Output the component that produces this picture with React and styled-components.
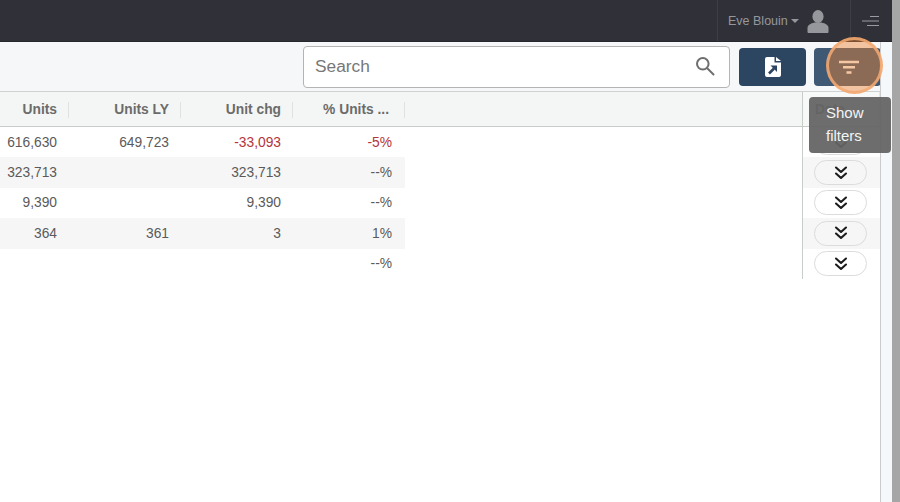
import React from "react";
import styled, { createGlobalStyle } from "styled-components";

const Global = createGlobalStyle`
  html, body { margin: 0; padding: 0; height: 100%; overflow: hidden; }
  body { font-family: "Liberation Sans", Arial, sans-serif; background: #fff; }
`;

const Page = styled.div`
  display: flex;
  width: 900px;
  height: 502px;
  position: relative;
  overflow: hidden;
`;

const Main = styled.div`
  flex: 1;
  display: flex;
  flex-direction: column;
  min-width: 0;
`;

const TopBar = styled.div`
  height: 42px;
  flex: none;
  box-sizing: border-box;
  background: #303138;
  border-bottom: 1px solid #26272c;
  display: flex;
  justify-content: flex-end;
  align-items: stretch;
`;

const UserBox = styled.div`
  display: flex;
  align-items: center;
  width: 133px;
  box-sizing: border-box;
  padding-left: 10px;
  border-left: 1px solid #3c3d45;
  color: #96979c;
  font-size: 12.5px;
`;

const Caret = styled.span`
  width: 0;
  height: 0;
  margin: 1px 0 0 3px;
  border-left: 4px solid transparent;
  border-right: 4px solid transparent;
  border-top: 4px solid #96979c;
`;

const Avatar = styled.svg`
  margin-left: 7px;
`;

const MenuBox = styled.div`
  width: 42px;
  box-sizing: border-box;
  border-left: 1px solid #3c3d45;
  display: flex;
  align-items: center;
  justify-content: flex-end;
  padding-right: 13px;
`;

const Body = styled.div`
  flex: 1;
  display: flex;
  min-height: 0;
`;

const Content = styled.div`
  width: 880px;
  flex: none;
  display: flex;
  flex-direction: column;
`;

const Gutter = styled.div`
  flex: 1;
  background: #f5f8fb;
  border-left: 1px solid #c9cbcd;
`;

const Scrollbar = styled.div`
  width: 8px;
  flex: none;
  background: #a6a6a6;
`;

const Toolbar = styled.div`
  height: 50px;
  flex: none;
  box-sizing: border-box;
  background: #f6f7f9;
  border-bottom: 1px solid #cfd1d3;
  display: flex;
  align-items: center;
  justify-content: flex-end;
`;

const SearchBox = styled.div`
  width: 427px;
  height: 42px;
  box-sizing: border-box;
  background: #fff;
  border: 1px solid #b4b4b4;
  border-radius: 4px;
  display: flex;
  align-items: center;
  justify-content: space-between;
  padding: 0 14px 1px 11px;
  margin-right: 9px;
  color: #777;
  font-size: 17.3px;
`;

const ActionButton = styled.div`
  width: 67px;
  height: 38px;
  border-radius: 4px;
  background: ${(p) => p.$bg};
  display: flex;
  align-items: center;
  justify-content: center;
  flex: none;
`;

const ExportButton = styled(ActionButton)`
  margin-right: 8px;
`;

const FilterButton = styled(ActionButton)`
  margin-right: -1px;
  padding-left: 3px;
  box-sizing: border-box;
`;

const TableWrap = styled.div`
  display: flex;
  justify-content: space-between;
  align-items: flex-start;
`;

const Grid = styled.div`
  width: 405px;
  flex: none;
`;

const HeaderRow = styled.div`
  display: grid;
  grid-template-columns: 69px repeat(3, 112px);
  height: 35px;
  box-sizing: border-box;
  width: 802px;
  padding-top: 2px;
  background: #f4f6f5;
  border-bottom: 1px solid #c8cdca;
  align-items: center;
`;

const HeaderCell = styled.div`
  height: 16px;
  line-height: 16px;
  box-sizing: border-box;
  padding-right: ${(p) => (p.$last ? "15px" : "11px")};
  text-align: right;
  font-weight: 700;
  font-size: 13.8px;
  color: #6b6b6b;
  border-right: 1px solid #dfe2e1;
`;

const Row = styled.div`
  display: grid;
  grid-template-columns: 69px repeat(3, 112px);
  height: 30.4px;
  background: ${(p) => (p.$alt ? "#f6f6f6" : "#fff")};
  align-items: center;
`;

const Cell = styled.div`
  box-sizing: border-box;
  padding-right: ${(p) => (p.$last ? "13px" : "12px")};
  text-align: right;
  font-size: 13.8px;
  color: ${(p) => (p.$neg ? "#b5333a" : "#5a5a5a")};
`;

const Actions = styled.div`
  width: 78px;
  flex: none;
  border-left: 1px solid #c8cdca;
  box-sizing: border-box;
`;

const ActionsHead = styled.div`
  height: 35px;
  box-sizing: border-box;
  padding-left: 12px;
  border-right: 1px solid #e3e5e5;
  border-bottom: 1px solid #c8cdca;
  background: #f7f8f8;
  font-size: 13.8px;
  font-weight: 700;
  color: #6b6b6b;
  line-height: 35px;
`;

const ActionRow = styled.div`
  height: 30.4px;
  display: flex;
  align-items: center;
  justify-content: center;
  padding-right: 2px;
  box-sizing: border-box;
  background: ${(p) => (p.$alt ? "#f6f6f6" : "#fff")};
`;

const Pill = styled.div`
  width: 53px;
  height: 25px;
  box-sizing: border-box;
  border: 1px solid #dcdcdc;
  border-radius: 12.5px;
  background: ${(p) => (p.$alt ? "#f6f6f6" : "#fff")};
  display: flex;
  align-items: center;
  justify-content: center;
`;

const Highlight = styled.div`
  position: absolute;
  left: 826px;
  top: 37px;
  width: 57px;
  height: 57px;
  box-sizing: border-box;
  border-radius: 50%;
  background: rgba(235, 130, 50, 0.45);
  border: 3px solid rgba(243, 170, 115, 0.85);
`;

const Tooltip = styled.div`
  position: absolute;
  left: 809px;
  top: 97px;
  width: 82px;
  height: 56px;
  box-sizing: border-box;
  padding: 4px 0 0 17px;
  background: rgba(100, 100, 100, 0.94);
  border-radius: 4px;
  color: #f4f4f4;
  font-size: 15px;
  line-height: 23px;
`;

const rows = [
  ["616,630", "649,723", "-33,093", "-5%", true],
  ["323,713", "", "323,713", "--%"],
  ["9,390", "", "9,390", "--%"],
  ["364", "361", "3", "1%"],
  ["", "", "", "--%"],
];

const Chevrons = () => (
  <svg width="14" height="14" viewBox="0 0 14 14" fill="none" stroke="#1c1c1c" strokeWidth="2.1" strokeLinecap="round" strokeLinejoin="round">
    <path d="M2 1.500 7 6 12 1.500" />
    <path d="M2 7.500 7 12 12 7.500" />
  </svg>
);

const App = () => (
  <Page>
    <Global />
    <Main>
      <TopBar>
        <UserBox>
          Eve Blouin
          <Caret />
          <Avatar width="24" height="24" viewBox="0 0 24 24" fill="#96979c">
            <ellipse cx="12" cy="7.500" rx="5.600" ry="6.500" />
            <path d="M1.500 23v-4c0-3 3-4.500 7-5.500h7c4 1 7 2.500 7 5.500v4c0 .5-.5 1-1 1H2.500c-.5 0-1-.5-1-1z" />
          </Avatar>
        </UserBox>
        <MenuBox>
          <svg width="17" height="12" viewBox="0 0 17 12" stroke="#9b9ca1" strokeWidth="1" fill="none">
            <path d="M8 1.500h9M0 6h17M5 10.500h12" />
          </svg>
        </MenuBox>
      </TopBar>
      <Body>
        <Content>
          <Toolbar>
            <SearchBox>
              Search
              <svg width="20" height="20" viewBox="0 0 20 20" fill="none" stroke="#6e6e6e" strokeWidth="2">
                <circle cx="7.800" cy="7.800" r="5.800" />
                <path d="M12 12l6.500 6.500" strokeLinecap="round" />
              </svg>
            </SearchBox>
            <ExportButton $bg="#2c4560">
              <svg width="18" height="20" viewBox="0 0 18 20">
                <path d="M3 0h7.500v5.500H17V18a2 2 0 0 1-2 2H3a2 2 0 0 1-2-2V2a2 2 0 0 1 2-2z" fill="#fff" />
                <path d="M12 0l5 4h-5z" fill="#fff" />
                <path d="M5 16.500l5-5" stroke="#2c4560" strokeWidth="2.600" fill="none" />
                <path d="M6.500 8.500H13V15z" fill="#2c4560" />
              </svg>
            </ExportButton>
            <FilterButton $bg="#3f5873">
              <svg width="20" height="14" viewBox="0 0 20 14" fill="none" stroke="#fff" strokeWidth="2.400">
                <path d="M0 2h20M4 7.200h12M7.500 12.500h5" />
              </svg>
            </FilterButton>
          </Toolbar>
          <TableWrap>
            <Grid>
              <HeaderRow>
                <HeaderCell>Units</HeaderCell>
                <HeaderCell>Units LY</HeaderCell>
                <HeaderCell>Unit chg</HeaderCell>
                <HeaderCell $last>% Units ...</HeaderCell>
              </HeaderRow>
              {rows.map((r, i) => (
                <Row key={i} $alt={i % 2 === 1}>
                  <Cell>{r[0]}</Cell>
                  <Cell>{r[1]}</Cell>
                  <Cell $neg={r[4]}>{r[2]}</Cell>
                  <Cell $neg={r[4]} $last>{r[3]}</Cell>
                </Row>
              ))}
            </Grid>
            <Actions>
              <ActionsHead>Deta</ActionsHead>
              {rows.map((r, i) => (
                <ActionRow key={i} $alt={i % 2 === 1}>
                  <Pill $alt={i % 2 === 1}>
                    <Chevrons />
                  </Pill>
                </ActionRow>
              ))}
            </Actions>
          </TableWrap>
        </Content>
        <Gutter />
      </Body>
    </Main>
    <Scrollbar />
    <Highlight />
    <Tooltip>
      Show
      <br />
      filters
    </Tooltip>
  </Page>
);

export default App;
